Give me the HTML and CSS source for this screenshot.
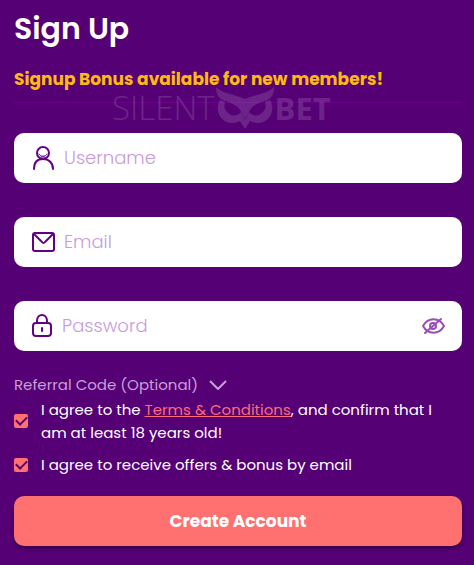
FILE: index.html
```html
<!DOCTYPE html>
<html lang="en">
<head>
    <meta charset="utf-8">
    <meta name="viewport" content="width=device-width, initial-scale=1">
    <title>Sign Up</title>
    <link rel="stylesheet" href="styles.css">
</head>
<body>
    <main class="signup">
        <h1>Sign Up</h1>
        <div class="promo">
            <p>Signup Bonus available for new members!</p>
            <div class="watermark">
                <span class="light">SILENT</span>
                <svg width="60" height="44" viewBox="0 0 60 44" fill="currentColor" aria-hidden="true">
                    <path d="M1 1C8 8 19 8 30 13C41 8 52 8 59 1C59 9 56 13 50 15C43 17 37 20 35 24L30 33L25 24C23 20 17 17 10 15C4 13 1 9 1 1Z"/>
                    <path d="M5 14C-1 23 5 37 17 37C21 37 23 36 25 35L30 43L35 35C37 36 39 37 43 37C55 37 61 23 55 14L50 16C51 20 51 23 48 26C44 31 37 30 34 26L30 34L26 26C23 30 16 31 12 26C9 23 9 20 10 16Z"/>
                </svg>
                <span class="bold">BET</span>
            </div>
        </div>

        <form>
            <div class="fields">
                <div class="field">
                    <label for="username" aria-label="Username">
                        <svg width="24" height="24" viewBox="0 0 24 24">
                            <circle cx="11" cy="7" r="6"/>
                            <path d="M2 23C2 17 5 13 11 13S21 17 21 23"/>
                            <path class="thin" d="M7 8C8 11 14 11 15 8M9 11H13"/>
                        </svg>
                    </label>
                    <input type="text" id="username" placeholder="Username">
                </div>
                <div class="field">
                    <label for="email" aria-label="Email">
                        <svg width="24" height="24" viewBox="0 0 24 24">
                            <rect x="1" y="3" width="21" height="18" rx="2"/>
                            <path d="M2 4L10 12Q11.500 14 13 12L21 4"/>
                        </svg>
                    </label>
                    <input type="email" id="email" placeholder="Email">
                </div>
                <div class="field">
                    <label for="password" aria-label="Password">
                        <svg width="22" height="24" viewBox="0 0 22 24">
                            <rect x="1" y="9" width="18" height="13" rx="3"/>
                            <path d="M5 9V7C5 -1 15 -1 15 7V9M10 14V17"/>
                        </svg>
                    </label>
                    <input type="password" id="password" placeholder="Password">
                    <button type="button" class="toggle" aria-label="Show password">
                        <svg width="24" height="18" viewBox="0 0 24 18">
                            <path d="M2 9C7 0 18 0 23 9C18 18 7 18 2 9Z"/>
                            <circle cx="12" cy="9" r="3"/>
                            <path d="M4 16L20 2"/>
                        </svg>
                    </button>
                </div>
            </div>

            <button type="button" class="referral">
                Referral Code (Optional)
                <svg width="18" height="10" viewBox="0 0 18 10">
                    <path d="M1 1L9 9L17 1"/>
                </svg>
            </button>

            <div class="check">
                <input type="checkbox" id="terms" checked>
                <label for="terms">I agree to the <a href="#">Terms &amp; Conditions</a>, and confirm that I am at least 18 years old!</label>
            </div>
            <div class="check">
                <input type="checkbox" id="offers" checked>
                <label for="offers">I agree to receive offers &amp; bonus by email</label>
            </div>

            <button type="submit" class="submit">Create Account</button>
        </form>
    </main>
</body>
</html>
```

FILE: styles.css
```css
* {
    box-sizing: border-box;
}
body {
    margin: 0;
    background: #550074;
    color: #fff;
    font-family: Poppins, Inter, sans-serif;
    font-size: 15px;
}
button,
input {
    font-family: inherit;
}
svg {
    display: block;
    flex: none;
}
.signup {
    padding: 9px 12px 18px 14px;
}
h1 {
    margin: 0 0 17px;
    font-size: 30px;
    line-height: 40px;
    font-weight: 600;
}
.promo {
    position: relative;
    padding-bottom: 10px;
    border-bottom: 1px solid #68008a;
}
.promo p {
    margin: 0;
    color: #fdb913;
    font-size: 17px;
    line-height: 26px;
    font-weight: 700;
}
.watermark {
    position: absolute;
    top: 20px;
    left: 98px;
    display: flex;
    align-items: center;
    color: #fff;
    opacity: 0.14;
    font-family: "Open Sans", sans-serif;
    font-size: 33px;
    line-height: 36px;
    pointer-events: none;
}
.watermark .light {
    font-weight: 300;
}
.watermark .bold {
    font-size: 31px;
    font-weight: 700;
}
.fields {
    display: flex;
    flex-direction: column;
    gap: 34px;
    margin-top: 30px;
}
.field {
    display: flex;
    align-items: center;
    gap: 8px;
    height: 50px;
    padding: 0 17px 0 18px;
    background: #fff;
    border-radius: 10px;
}
.field svg {
    fill: none;
    stroke: #630086;
    stroke-width: 2;
    stroke-linecap: round;
    stroke-linejoin: round;
}
.field .thin {
    stroke-width: 1;
}
.field input {
    flex: 1;
    min-width: 0;
    padding: 0 0 2px;
    border: none;
    outline: none;
    background: none;
    color: #550074;
    font-size: 18px;
    font-weight: 300;
}
.field input::placeholder {
    color: #c99bdb;
    opacity: 1;
}
.toggle {
    padding: 0;
    border: none;
    background: none;
    cursor: pointer;
}
.field .toggle svg {
    stroke: #9a4db8;
}
.referral {
    display: flex;
    align-items: center;
    gap: 11px;
    margin: 23px 0 2px;
    padding: 0;
    border: none;
    background: none;
    color: #c99fd8;
    font-size: 15px;
    line-height: 22px;
    cursor: pointer;
}
.referral svg {
    fill: none;
    stroke: currentColor;
    stroke-width: 2;
}
.check {
    display: flex;
    align-items: center;
    gap: 13px;
    margin-bottom: 9px;
    padding-right: 16px;
    line-height: 23px;
}
.check input {
    appearance: none;
    flex: none;
    width: 14px;
    height: 14px;
    margin: 0;
    display: grid;
    place-items: center;
    background: #ff7070;
    border-radius: 2px;
}
.check input:checked::before {
    content: "";
    width: 9px;
    height: 5px;
    margin-bottom: 3px;
    border: solid #550074;
    border-width: 0 0 2px 2px;
    transform: rotate(-45deg);
}
.check a {
    color: #ff6b7a;
    text-decoration: underline;
}
.submit {
    display: block;
    width: 100%;
    height: 50px;
    margin-top: 20px;
    border: none;
    border-radius: 10px;
    background: #ff7070;
    color: #fff;
    font-size: 17px;
    font-weight: 700;
    box-shadow: 0 2px 4px rgba(0, 0, 0, 0.4);
    cursor: pointer;
}
```
